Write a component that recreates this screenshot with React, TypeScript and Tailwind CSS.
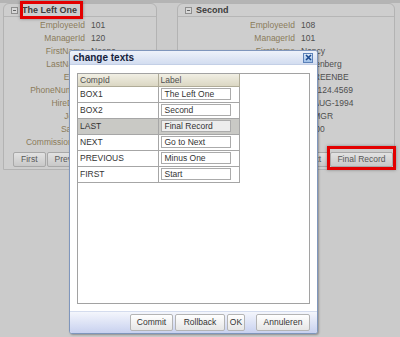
import React from 'react';

const leftRows: [string, string][] = [
  ['EmployeeId', '101'],
  ['ManagerId', '120'],
  ['FirstName', 'Neena'],
  ['LastName', 'Kochhar'],
  ['Email', 'NKOCHHAR'],
  ['PhoneNumber', '515.123.4568'],
  ['HireDate', '21-SEP-1989'],
  ['JobId', 'AD_VP'],
  ['Salary', '17000'],
  ['CommissionPct', ''],
];

const rightRows: [string, string][] = [
  ['EmployeeId', '108'],
  ['ManagerId', '101'],
  ['FirstName', 'Nancy'],
  ['LastName', 'Greenberg'],
  ['Email', 'NGREENBE'],
  ['PhoneNumber', '515.124.4569'],
  ['HireDate', '17-AUG-1994'],
  ['JobId', 'FI_MGR'],
  ['Salary', '12000'],
  ['CommissionPct', ''],
];

const texts: [string, string][] = [
  ['BOX1', 'The Left One'],
  ['BOX2', 'Second'],
  ['LAST', 'Final Record'],
  ['NEXT', 'Go to Next'],
  ['PREVIOUS', 'Minus One'],
  ['FIRST', 'Start'],
];

function NavButton({ label, className = 'px-[7px]' }: { label: string; className?: string }) {
  return (
    <div
      className={`h-[15px] flex items-center justify-center border border-[#a8a8a8] rounded-[2px] bg-gradient-to-b from-[#e2e2e2] to-[#c8c8c8] text-[#585858] whitespace-nowrap ${className}`}
    >
      {label}
    </div>
  );
}

function Panel({
  title,
  rows,
  labelWidth,
  width,
  buttonsEnd,
}: {
  title: string;
  rows: [string, string][];
  labelWidth: string;
  width: string;
  buttonsEnd?: boolean;
}) {
  return (
    <div className={`${width} h-[167px] shrink-0 rounded-t-[6px] border border-[#b3b3b3] bg-[#cecece] flex flex-col`}>
      {/* Header */}
      <div className="h-[13px] border-b border-[#b6b6b6] flex items-center pl-[7px] gap-[4px]">
        <div className="w-[7px] h-[7px] border border-[#8e8e8e] bg-[#d8d8d8] flex items-center justify-center">
          <div className="w-[3px] h-px bg-[#666]" />
        </div>
        <span className="font-bold text-[9px] text-[#3c3c3c]">{title}</span>
      </div>

      {/* Fields */}
      <div className="pt-[2px]">
        {rows.map(([label, value]) => (
          <div key={label} className="flex h-[13px] items-center">
            <span className={`${labelWidth} text-right text-[#8a7b5a]`}>{label}</span>
            <span className="ml-[6px] text-[#4e4e4e] whitespace-nowrap">{value}</span>
          </div>
        ))}
      </div>

      {/* Buttons */}
      <div className={`mt-[3px] flex gap-px ${buttonsEnd ? 'justify-end pr-px' : 'pl-[9px]'}`}>
        <NavButton label="First" />
        <NavButton label="Previous" />
        <NavButton label="Next" />
        {buttonsEnd ? <NavButton label="Final Record" className="w-[63px]" /> : <NavButton label="Last" />}
      </div>
    </div>
  );
}

function FooterButton({ label, className = '' }: { label: string; className?: string }) {
  return (
    <div
      className={`h-[17px] flex items-center justify-center border border-[#b4b4b4] rounded-[2px] bg-gradient-to-b from-[#ffffff] to-[#e6e6e6] text-[#333] ${className}`}
    >
      {label}
    </div>
  );
}

export default function App() {
  return (
    <div className="relative w-[400px] h-[337px] overflow-hidden bg-[#cbcbcb] font-['Liberation_Sans',Arial,sans-serif] text-[8.5px] leading-none">
      <div className="h-[3px] bg-[#b4b4b4]" />

      <div className="flex pl-[3px] gap-[20px]">
        <Panel title="The Left One" rows={leftRows} labelWidth="w-[81px]" width="w-[154px]" />
        <Panel title="Second" rows={rightRows} labelWidth="w-[117px]" width="w-[218px]" buttonsEnd />
      </div>

      {/* Annotation boxes */}
      <div className="absolute left-[20px] top-[1px] w-[63px] h-[18px] border-[3px] border-[#e30000] shadow-[0_0_3px_rgba(0,0,0,0.35)]" />
      <div className="absolute left-[327px] top-[146px] w-[69px] h-[24px] border-[3px] border-[#e30000] shadow-[0_0_3px_rgba(0,0,0,0.35)]" />

      {/* Dialog */}
      <div className="absolute left-[69px] top-[50px] w-[249px] h-[284px] flex flex-col border border-[#7f96bc] rounded-[3px] bg-white shadow-[1px_1px_2px_rgba(0,0,0,0.3)] overflow-hidden">
        <div className="h-[14px] shrink-0 flex items-center justify-between pl-[3px] pr-[4px] bg-gradient-to-b from-[#eef2fa] to-[#d3ddf0] border-b border-[#c3cfe6]">
          <span className="font-bold text-[10px] text-[#16223c]">change texts</span>
          <div className="w-[10px] h-[10px] border border-[#5d82b9] bg-gradient-to-b from-[#dce9f9] to-[#9ebfe7] flex items-center justify-center">
            <svg width="7" height="7" viewBox="0 0 7 7">
              <path d="M1 1L6 6M6 1L1 6" stroke="#1c4a90" strokeWidth="1.6" />
            </svg>
          </div>
        </div>

        <div className="flex-1 p-[7px] pt-[8px]">
          <div className="h-full border border-[#a2a2a2]">
            <table className="border-collapse text-[#333]">
              <thead>
                <tr className="h-[12px] bg-gradient-to-b from-[#f1efe4] to-[#dbd7c3]">
                  <th className="w-[80px] p-0 pl-[2px] border border-t-0 border-l-0 border-[#b0ac98] text-left font-normal text-[#505050]">CompId</th>
                  <th className="w-[81px] p-0 pl-[2px] border border-t-0 border-[#b0ac98] text-left font-normal text-[#505050]">Label</th>
                </tr>
              </thead>
              <tbody>
                {texts.map(([id, label]) => (
                  <tr key={id} className={`h-[16px] ${id === 'LAST' ? 'bg-[#c9c9c5]' : 'bg-white'}`}>
                    <td className="p-0 pl-[2px] border border-l-0 border-[#a6a6a6]">{id}</td>
                    <td className="p-0 pl-[2px] border border-[#a6a6a6]">
                      <div
                        className={`w-[70px] h-[12px] pl-[3px] flex items-center border border-[#ababab] ${
                          id === 'LAST' ? 'bg-[#ededed]' : 'bg-white'
                        }`}
                      >
                        {label}
                      </div>
                    </td>
                  </tr>
                ))}
              </tbody>
            </table>
          </div>
        </div>

        <div className="h-[22px] shrink-0 flex items-center justify-end pr-[7px] gap-[2px] bg-gradient-to-b from-[#f4f6fc] to-[#c8d1ef] border-t border-[#d4dcee]">
          <FooterButton label="Commit" className="w-[43px]" />
          <FooterButton label="Rollback" className="w-[50px]" />
          <FooterButton label="OK" className="w-[18px] mr-[9px]" />
          <FooterButton label="Annuleren" className="w-[54px]" />
        </div>
      </div>
    </div>
  );
}
